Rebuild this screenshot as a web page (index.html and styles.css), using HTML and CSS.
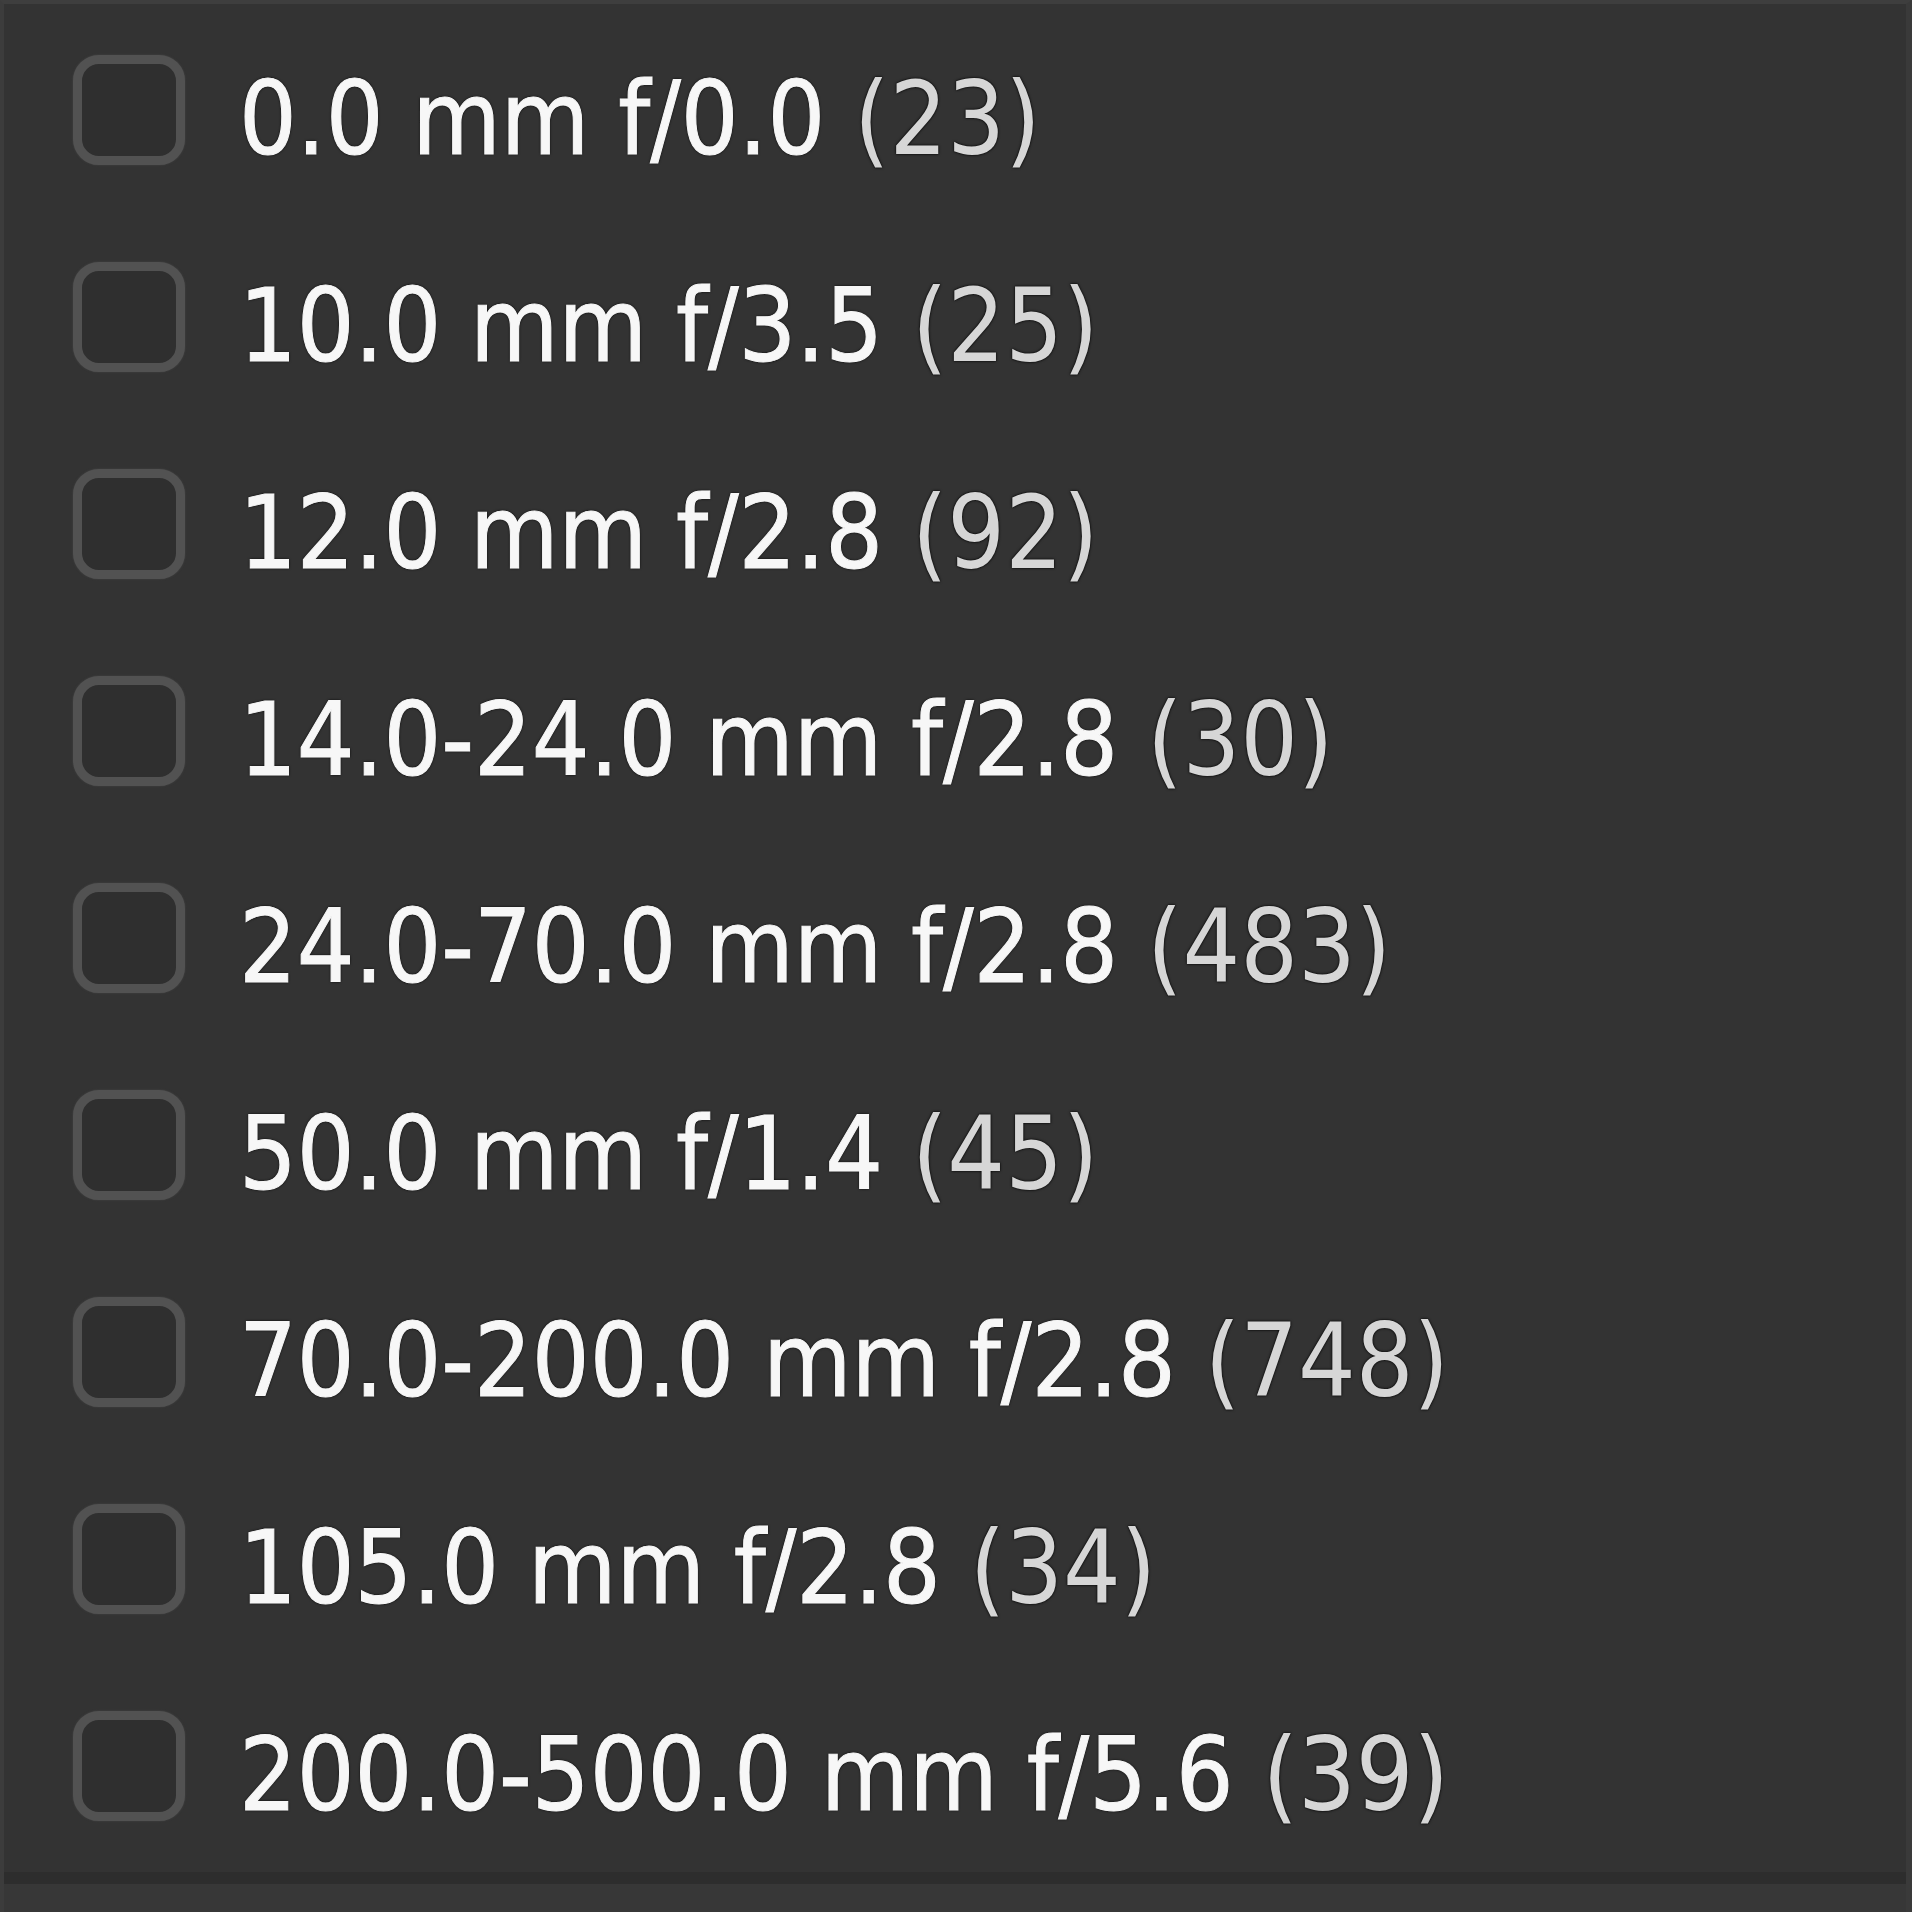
FILE: index.html
```html
<!DOCTYPE html>
<html lang="en">
<head>
    <meta charset="UTF-8" />
    <meta name="viewport" content="width=device-width, initial-scale=1.0"/>
    <title>Lens Filter</title>
    <link rel="stylesheet" href="styles.css">
</head>
<body>
    <main class="panel">
        <ul class="lens-list">
            <li class="lens-item"><span class="check"></span><span class="lens-name">0.0 mm f/0.0 <span class="lens-count">(23)</span></span></li>
            <li class="lens-item"><span class="check"></span><span class="lens-name">10.0 mm f/3.5 <span class="lens-count">(25)</span></span></li>
            <li class="lens-item"><span class="check"></span><span class="lens-name">12.0 mm f/2.8 <span class="lens-count">(92)</span></span></li>
            <li class="lens-item"><span class="check"></span><span class="lens-name">14.0-24.0 mm f/2.8 <span class="lens-count">(30)</span></span></li>
            <li class="lens-item"><span class="check"></span><span class="lens-name">24.0-70.0 mm f/2.8 <span class="lens-count">(483)</span></span></li>
            <li class="lens-item"><span class="check"></span><span class="lens-name">50.0 mm f/1.4 <span class="lens-count">(45)</span></span></li>
            <li class="lens-item"><span class="check"></span><span class="lens-name">70.0-200.0 mm f/2.8 <span class="lens-count">(748)</span></span></li>
            <li class="lens-item"><span class="check"></span><span class="lens-name">105.0 mm f/2.8 <span class="lens-count">(34)</span></span></li>
            <li class="lens-item"><span class="check"></span><span class="lens-name">200.0-500.0 mm f/5.6 <span class="lens-count">(39)</span></span></li>
        </ul>
        <div class="panel-footer"></div>
    </main>
</body>
</html>
```

FILE: styles.css
```css
* {
    margin: 0;
    padding: 0;
    box-sizing: border-box;
}

html, body {
    width: 1912px;
    height: 1912px;
    background-color: #333333;
    overflow: hidden;
}

body {
    font-family: "DejaVu Sans Condensed", "DejaVu Sans", sans-serif;
}

.panel {
    width: 1912px;
    height: 1912px;
    display: flex;
    flex-direction: column;
    border-top: 4px solid #3e3e3e;
    border-left: 4px solid #3c3c3c;
    border-right: 6px solid #3a3a3a;
}

.lens-list {
    list-style: none;
    flex: 1;
    padding: 2px 0 0 69px;
    border-bottom: 12px solid #2d2d2d;
}

.lens-item {
    height: 207px;
    display: flex;
    align-items: center;
    gap: 54px;
}

.check {
    width: 112px;
    height: 110px;
    flex-shrink: 0;
    border: 9px solid #525252;
    border-radius: 26px;
    background-color: #2f2f2f;
    box-shadow: 0 0 2px #4a4a4a;
}

.lens-name {
    font-size: 101px;
    color: #f7f7f7;
    padding-top: 18px;
    white-space: nowrap;
    -webkit-text-stroke: 1px #f7f7f7;
    text-shadow: 0 0 3px #000, 0 0 1px #000;
}

.lens-count {
    color: #d6d6d6;
    -webkit-text-stroke: 0;
}

.panel-footer {
    height: 28px;
    background-color: #373737;
}
```
